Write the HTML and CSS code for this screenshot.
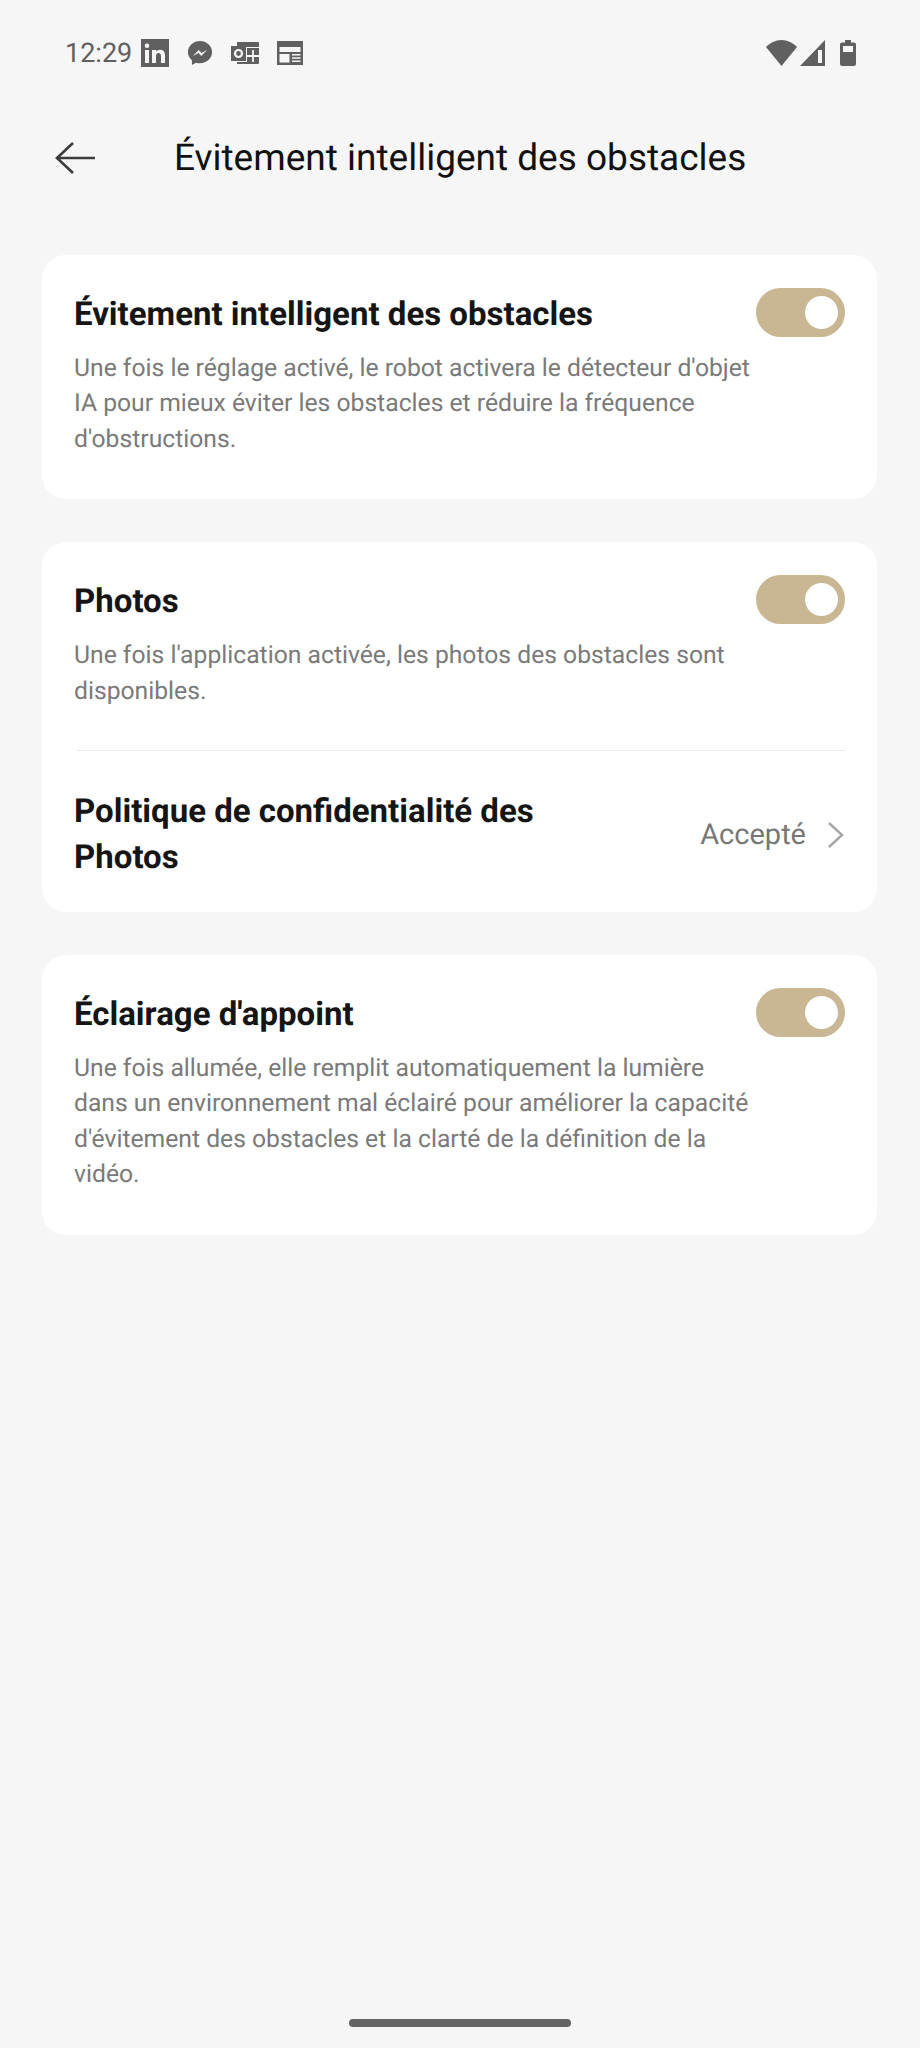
FILE: index.html
```html
<!DOCTYPE html>
<html lang="fr">
<head>
    <meta charset="UTF-8">
    <title>Évitement intelligent des obstacles</title>
    <meta name="viewport" content="width=device-width, initial-scale=1.0">
    <link rel="stylesheet" href="styles.css">
</head>
<body>

<!-- Barre d'état -->
<div class="status-bar">
    <div class="status-left">
        <span class="time">12:29</span>
        <svg class="icon-linkedin" width="28" height="28" viewBox="0 0 28 28"><path fill="#606060" fill-rule="evenodd" d="M0 0h28v28H0zM4 11v13h4V11zM6 4.500a2.300 2.300 0 1 0 0 4.600 2.300 2.300 0 0 0 0-4.600zM11 11v13h4v-7c0-2 1-3 2.500-3s2.500 1 2.500 3v7h4v-8c0-3.500-2-5.300-4.800-5.300-1.800 0-3 .8-3.700 2V11z"/></svg>
        <svg class="icon-messenger" width="26" height="26" viewBox="0 0 28 28"><path fill="#606060" d="M14 1C6.800 1 1 6.300 1 13c0 3.600 1.600 6.700 4.300 8.900V27l4.500-2.500c1.300.4 2.700.6 4.200.6 7.200 0 13-5.400 13-12.100S21.200 1 14 1z"/><path fill="#f6f6f6" d="M6.500 17.200l6-6.400 3.200 3.200 5.800-3.200-6 6.400-3.200-3.200z"/></svg>
        <svg class="icon-outlook" width="28" height="22" viewBox="0 0 28 22"><path fill="#606060" d="M6 0h21a1 1 0 0 1 1 1v4H6zM0 4h15v15H0zM16 6h12v15a1 1 0 0 1-1 1H6v-2h10z"/><path fill="none" stroke="#f6f6f6" stroke-width="1.800" d="M22 8v12M16 14h12"/><circle cx="7.500" cy="11.500" r="3.500" fill="none" stroke="#f6f6f6" stroke-width="2.200"/></svg>
        <svg class="icon-news" width="26" height="24" viewBox="0 0 26 24"><path fill="#606060" d="M0 0h26v24H0z"/><path fill="#f6f6f6" d="M2.500 6h21v5h-21zM2.500 13h10v8.500h-10zM15 13h8.500v1.500H15zM15 16.300h8.500v1.500H15zM15 19.600h8.500v1.500H15z"/></svg>
    </div>
    <div class="status-right">
        <svg class="icon-wifi" width="31" height="26" viewBox="0 0 31 26"><path fill="#606060" d="M0 7C4 3 9.500 0 15.500 0S27 3 31 7L15.500 26z"/></svg>
        <svg class="icon-signal" width="25" height="26" viewBox="0 0 25 26"><path fill="#606060" d="M25 0v26H0z"/><path fill="#f6f6f6" d="M18 10h4v13h-4z"/></svg>
        <svg class="icon-battery" width="16" height="26" viewBox="0 0 16 26"><path fill="#606060" d="M5 0h6v2.500h3a2 2 0 0 1 2 2V24a2 2 0 0 1-2 2H2a2 2 0 0 1-2-2V4.500a2 2 0 0 1 2-2h3z"/><path fill="#f6f6f6" d="M3 6h10v6H3z"/></svg>
    </div>
</div>

<!-- En-tête -->
<header class="page-header">
    <svg class="back" width="42" height="34" viewBox="0 0 42 34"><path fill="none" stroke="#3c3c3c" stroke-width="2.600" d="M2 17h38M18 2L2 17l16 15"/></svg>
    <h1>Évitement intelligent des obstacles</h1>
</header>

<main class="cards">
    <section class="card">
        <div class="row">
            <div class="row-text">
                <h2>Évitement intelligent des obstacles</h2>
                <p>Une fois le réglage activé, le robot activera le détecteur d'objet IA pour mieux éviter les obstacles et réduire la fréquence d'obstructions.</p>
            </div>
            <span class="switch"></span>
        </div>
    </section>

    <section class="card">
        <div class="row">
            <div class="row-text">
                <h2>Photos</h2>
                <p>Une fois l'application activée, les photos des obstacles sont disponibles.</p>
            </div>
            <span class="switch"></span>
        </div>
        <hr class="divider">
        <div class="link-row">
            <h2 class="link-title">Politique de confidentialité des Photos</h2>
            <span class="link-value">Accepté</span>
            <svg class="chevron" width="18" height="28" viewBox="0 0 18 28"><path fill="none" stroke="#a6a6a6" stroke-width="2.400" d="M2 2l13 12L2 26"/></svg>
        </div>
    </section>

    <section class="card">
        <div class="row">
            <div class="row-text">
                <h2>Éclairage d'appoint</h2>
                <p>Une fois allumée, elle remplit automatiquement la lumière dans un environnement mal éclairé pour améliorer la capacité d'évitement des obstacles et la clarté de la définition de la vidéo.</p>
            </div>
            <span class="switch"></span>
        </div>
    </section>
</main>

<div class="home-bar"></div>

</body>
</html>
```

FILE: styles.css
```css
html, body {
    margin: 0;
    padding: 0;
}
body {
    position: relative;
    width: 920px;
    height: 2048px;
    overflow: hidden;
    background-color: #f6f6f6;
    font-family: Roboto, "Liberation Sans", sans-serif;
    color: #111;
    text-rendering: geometricPrecision;
}

/* barre d'état */
.status-bar {
    display: flex;
    justify-content: space-between;
    align-items: center;
    height: 28px;
    padding: 39px 64px 0 65px;
}
.status-left, .status-right {
    display: flex;
    align-items: center;
}
.time {
    font-size: 27px;
    color: #606060;
    margin-right: 9px;
}
.icon-messenger { margin-left: 18px; }
.icon-outlook { margin-left: 18px; }
.icon-news { margin-left: 18px; }
.icon-signal { margin-left: 3px; }
.icon-battery { margin-left: 15px; }

/* en-tête */
.page-header {
    display: flex;
    align-items: center;
    height: 60px;
    margin-top: 61px;
    padding-left: 55px;
}
.back {
    flex: none;
}
.page-header h1 {
    margin: 0 0 0 77px;
    font-size: 37px;
    font-weight: 400;
    white-space: nowrap;
}

/* cartes */
.cards {
    display: flex;
    flex-direction: column;
    gap: 43px;
    margin: 67px 43px 0 42px;
}
.card {
    background: #fff;
    border-radius: 24px;
    padding: 30px 32px 32px;
}
.row {
    display: flex;
    justify-content: space-between;
    align-items: flex-start;
}
.row-text {
    width: 680px;
    padding: 8px 0 10px;
}
h2 {
    margin: 0;
    font-size: 33px;
    line-height: 44px;
    font-weight: 700;
    color: #151515;
}
.row-text p {
    margin: 14px 0 0;
    font-size: 24.700px;
    line-height: 35.400px;
    color: #7a7a7a;
}
.switch {
    position: relative;
    flex: none;
    width: 89px;
    height: 49px;
    margin-top: 3px;
    border-radius: 25px;
    background: #c9b794;
}
.switch::after {
    content: "";
    position: absolute;
    right: 7px;
    top: 8px;
    width: 33px;
    height: 33px;
    border-radius: 50%;
    background: #fff;
}
.divider {
    border: 0;
    border-top: 1px solid #ececec;
    margin: 31px 0 38px 3px;
}
.link-row {
    display: flex;
    align-items: center;
}
.link-title {
    width: 500px;
    line-height: 45.500px;
}
.link-value {
    margin-left: auto;
    font-size: 29px;
    color: #777;
}
.chevron {
    margin-left: 21px;
}

.home-bar {
    position: absolute;
    left: 349px;
    top: 2019px;
    width: 222px;
    height: 8px;
    border-radius: 4px;
    background: #636363;
}
```
